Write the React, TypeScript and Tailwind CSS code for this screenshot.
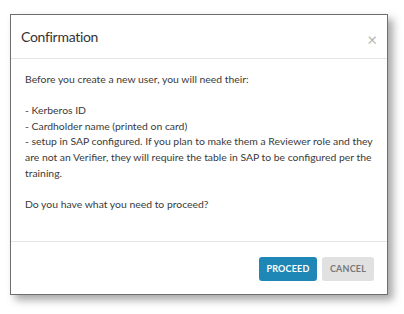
export default function App() {
  return (
    <div className="w-[404px] h-[314px] bg-white pt-[14px] pl-[10px]" style={{ fontFamily: 'Lato, "Noto Sans", sans-serif' }}>
      <div className="w-[378px] h-[281px] border border-[#6e6e6e] bg-white shadow-[5px_5px_8px_rgba(0,0,0,0.35)] flex flex-col">
        <div className="h-[44px] flex items-center justify-between pl-[10px] pr-[10px] border-b border-[#e5e5e5] shrink-0">
          <h3 className="text-[14px] tracking-[-0.3px] text-[#333]">Confirmation</h3>
          <button className="text-[17px] leading-none text-[#b5b5b5] mt-[5px]">×</button>
        </div>
        <div className="flex-1 px-[14px] pt-[13px] text-[10.4px] leading-[15.6px] text-[#3a3a3a]">
          <p>Before you create a new user, you will need their:</p>
          <p className="mt-[15.6px]">- Kerberos ID</p>
          <p>- Cardholder name (printed on card)</p>
          <p>
            - setup in SAP configured. If you plan to make them a Reviewer role and they are not an Verifier, they will
            require the table in SAP to be configured per the training.
          </p>
          <p className="mt-[15.6px]">Do you have what you need to proceed?</p>
        </div>
        <div className="h-[53px] border-t border-[#e5e5e5] flex items-start justify-end gap-[5px] pt-[15px] pr-[13px] shrink-0">
          <button className="w-[58px] h-[24px] rounded-[3px] bg-[#1e87b5] text-white text-[9px] font-bold tracking-[0.2px]">
            PROCEED
          </button>
          <button className="w-[52px] h-[24px] rounded-[3px] bg-[#e1e1e1] text-[#777] text-[9px] font-bold tracking-[0.2px]">
            CANCEL
          </button>
        </div>
      </div>
    </div>
  )
}
